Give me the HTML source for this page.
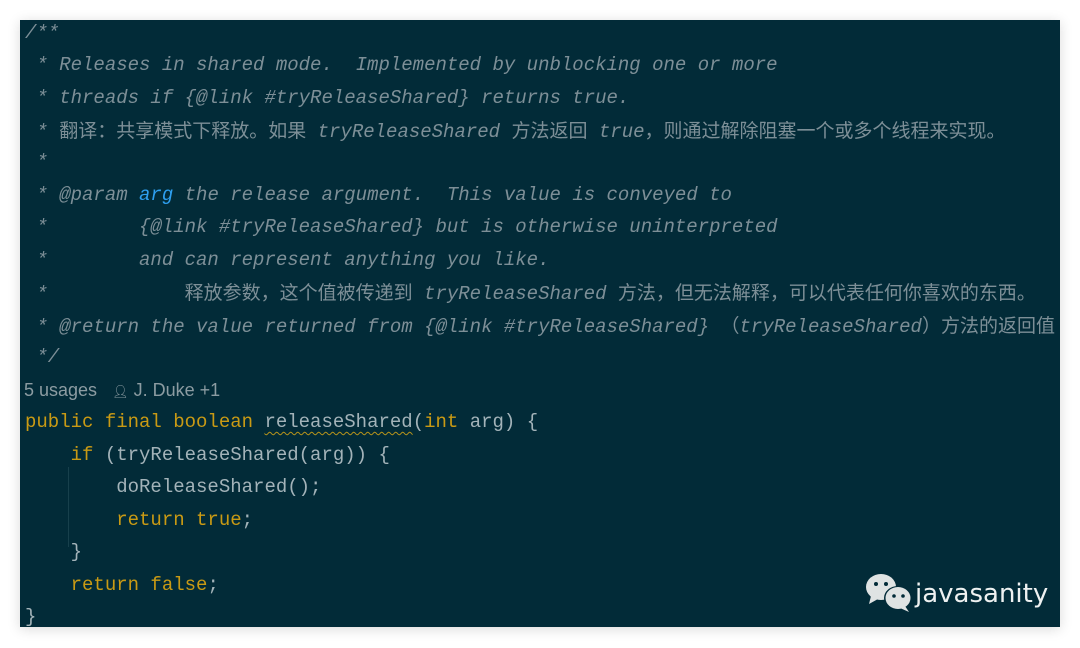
<!DOCTYPE html>
<html><head><meta charset="utf-8"><style>
body{margin:0;width:1080px;height:648px;background:#fff;overflow:hidden;position:relative}
.p{position:absolute;left:20px;top:20px;width:1040px;height:607px;background:#022b38;box-shadow:0 2px 12px rgba(0,0,0,.15);overflow:hidden}
.l{position:absolute;left:5px;white-space:pre;font-family:"Liberation Mono","Noto Sans CJK SC",monospace;font-size:19px;line-height:24px;color:#a3b3b9;margin-top:1px}
.c{font-style:italic;color:#7d8f97}
.c .z{font-style:normal;font-family:"Noto Sans CJK SC",sans-serif;font-size:19px}
.k{color:#c99a14}
.b{color:#2e9ff0}
.u{text-decoration:underline wavy #b8941a;text-underline-offset:4px;text-decoration-thickness:1px}
.meta{font-family:"Liberation Sans",sans-serif;font-size:18px;color:#8c9ca2}
.guide{position:absolute;left:48px;top:447px;width:1px;height:80px;background:#17404c}
</style></head><body>
<div class="p">
<div class="l c" style="top:0px">/**</div>
<div class="l c" style="top:32px"> * Releases in shared mode.  Implemented by unblocking one or more</div>
<div class="l c" style="top:65px"> * threads if {@link #tryReleaseShared} returns true.</div>
<div class="l c" style="top:97px"> * <span class="z">翻译：共享模式下释放。如果</span> tryReleaseShared <span class="z">方法返回</span> true<span class="z">，则通过解除阻塞一个或多个线程来实现。</span></div>
<div class="l c" style="top:129px"> *</div>
<div class="l c" style="top:162px"> * @param <span class="b">arg</span> the release argument.  This value is conveyed to</div>
<div class="l c" style="top:194px"> *        {@link #tryReleaseShared} but is otherwise uninterpreted</div>
<div class="l c" style="top:227px"> *        and can represent anything you like.</div>
<div class="l c" style="top:259px"> *            <span class="z">释放参数，这个值被传递到</span> tryReleaseShared <span class="z">方法，但无法解释，可以代表任何你喜欢的东西。</span></div>
<div class="l c" style="top:292px"> * @return the value returned from {@link #tryReleaseShared} <span class="z">（</span>tryReleaseShared<span class="z">）方法的返回值</span></div>
<div class="l c" style="top:324px"> */</div>
<div class="l meta" style="top:357px;left:4px">5 usages &nbsp;&nbsp;<span style="font-size:13px">&#128100;&#xFE0E;</span> J. Duke +1</div>
<div class="l" style="top:389px"><span class="k">public final boolean </span><span class="u">releaseShared</span>(<span class="k">int</span> arg) {</div>
<div class="l" style="top:422px">    <span class="k">if</span> (tryReleaseShared(arg)) {</div>
<div class="guide"></div>
<div class="l" style="top:454px">        doReleaseShared();</div>
<div class="l" style="top:487px">        <span class="k">return true</span>;</div>
<div class="l" style="top:519px">    }</div>
<div class="l" style="top:552px">    <span class="k">return false</span>;</div>
<div class="l" style="top:584px">}</div>
<svg style="position:absolute;left:845px;top:552px" width="50" height="42" viewBox="0 0 50 42">
<ellipse cx="16" cy="15" rx="15" ry="13" fill="#dfe3e3"/><path d="M6 24 L4 32 L13 27Z" fill="#dfe3e3"/>
<circle cx="11" cy="12" r="2" fill="#022b38"/><circle cx="21" cy="12" r="2" fill="#022b38"/>
<ellipse cx="33" cy="26" rx="14" ry="12" fill="#022b38"/>
<ellipse cx="33" cy="26" rx="12.5" ry="11" fill="#dfe3e3"/><path d="M40 34 L44 40 L35 36Z" fill="#dfe3e3"/>
<circle cx="29" cy="24" r="1.8" fill="#022b38"/><circle cx="38" cy="24" r="1.8" fill="#022b38"/>
</svg>
<div style="position:absolute;left:895px;top:559px;font-family:'DejaVu Sans','Liberation Sans',sans-serif;font-size:26px;color:#eef1f1">javasanity</div>
</div>
</body></html>
